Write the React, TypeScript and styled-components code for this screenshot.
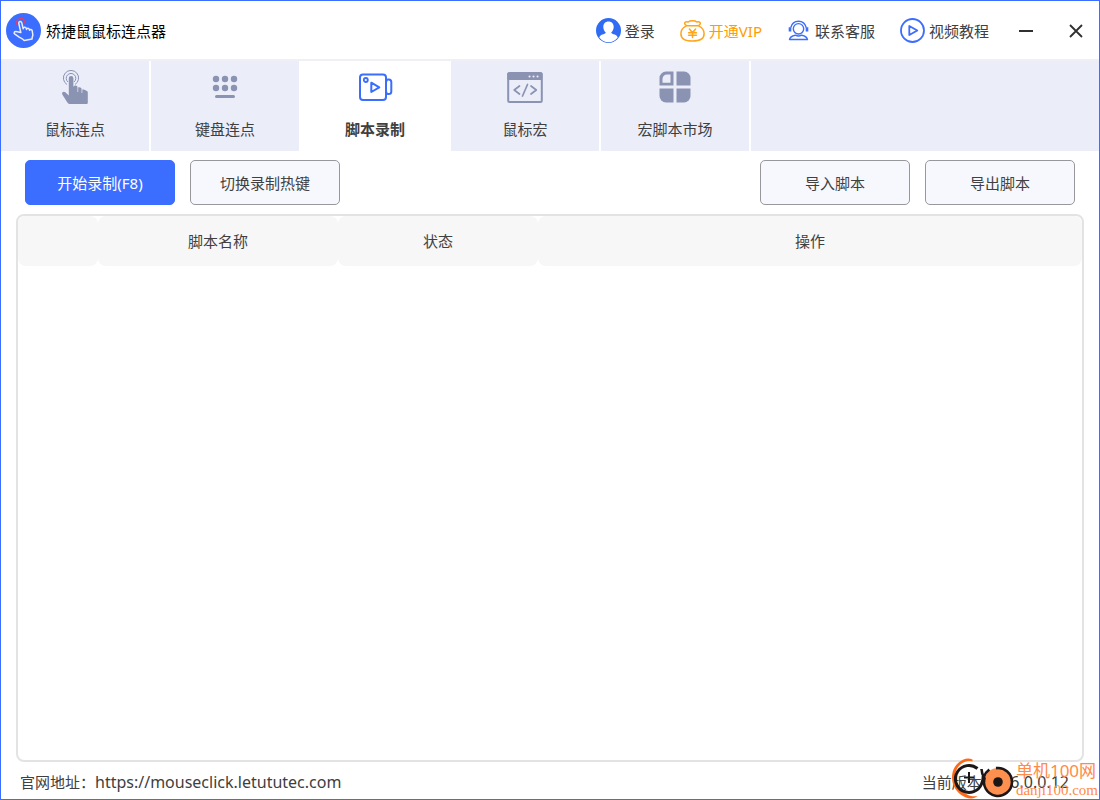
import React from "react";
import styled, { createGlobalStyle } from "styled-components";

const blue = "#3b6dff";
const ink = "#404040";
const slate = "#8b93b3";

const GlobalStyle = createGlobalStyle`
  *, *::before, *::after { box-sizing: border-box; }
  body {
    margin: 0;
    background: #fff;
    color: ${ink};
    font: 15px/20px "Noto Sans", "Noto Sans CJK SC", sans-serif;
  }
  button { font: inherit; color: inherit; border: 0; padding: 0; background: none; cursor: pointer; }
  svg { display: block; flex: none; }
`;

const Window = styled.div`
  position: relative;
  display: flex;
  flex-direction: column;
  min-height: 100vh;
  border: 1px solid ${blue};
`;

const TitleBar = styled.header`
  display: flex;
  align-items: center;
  justify-content: space-between;
  height: 60px;
  padding: 1px 13px 0 5px;
  border-bottom: 2px solid #f0eff6;
`;

const Brand = styled.h1`
  display: flex;
  align-items: center;
  gap: 5px;
  margin: 0;
  font-size: 15px;
  font-weight: 400;
  color: #000;
`;

const Actions = styled.div`
  display: flex;
  align-items: center;
`;

const ActionButton = styled.button<{ $vip?: boolean }>`
  display: flex;
  align-items: center;
  gap: 4px;
  margin-right: 25px;
  white-space: nowrap;
  color: ${(p) => (p.$vip ? "#ff9c00" : ink)};
`;

const WindowControls = styled.div`
  display: flex;
  gap: 30px;
  padding-left: 2px;
`;

const WindowButton = styled.button`
  display: grid;
  place-items: center;
  width: 20px;
  height: 30px;
`;

const Tabs = styled.nav`
  display: flex;
  height: 90px;
  background: #ebedf9;
`;

const Tab = styled.button<{ $active?: boolean }>`
  display: flex;
  flex-direction: column;
  align-items: center;
  gap: 14px;
  width: 150px;
  padding: 8px 0 0;
  border-right: 2px solid #fff;
  background: ${(p) => (p.$active ? "#fff" : "transparent")};
  font-weight: ${(p) => (p.$active ? 700 : 400)};
`;

const Main = styled.main`
  flex: 1;
  display: flex;
  flex-direction: column;
  padding: 9px 15px 0;
`;

const Toolbar = styled.div`
  display: flex;
  gap: 15px;
  padding: 0 9px;
  margin-bottom: 9px;
`;

const ToolButton = styled.button<{ $primary?: boolean; $pushRight?: boolean }>`
  width: 150px;
  height: 45px;
  border-radius: 5px;
  border: 1px solid ${(p) => (p.$primary ? blue : "#98989c")};
  background: ${(p) => (p.$primary ? blue : "#f6f8fd")};
  color: ${(p) => (p.$primary ? "#fff" : ink)};
  margin-left: ${(p) => (p.$pushRight ? "auto" : "0")};
`;

const TableFrame = styled.section`
  flex: 1;
  border: 2px solid #e3e3e3;
  border-radius: 8px;
`;

const ScriptTable = styled.table`
  width: 100%;
  table-layout: fixed;
  border-spacing: 0;
`;

const HeadCell = styled.th<{ $width?: number }>`
  width: ${(p) => (p.$width ? `${p.$width}px` : "auto")};
  height: 50px;
  padding: 0;
  border-radius: 8px;
  background: #f7f7f7;
  font-weight: 400;
`;

const Footer = styled.footer`
  display: flex;
  justify-content: space-between;
  padding: 10px 30px 7px 19px;
`;

const SiteLink = styled.a`
  font-size: 16px;
  color: inherit;
  text-decoration: none;
`;

const Version = styled.span`
  display: flex;
  gap: 4px;
`;

const VersionNumber = styled.span`
  font-size: 16px;
`;

const Watermark = styled.div`
  position: absolute;
  right: 1px;
  bottom: 0;
  display: flex;
  align-items: flex-end;
  gap: 2px;
  color: #ff8a4a;
`;

const WatermarkText = styled.div`
  display: flex;
  flex-direction: column;
  white-space: nowrap;
`;

const WatermarkName = styled.span`
  font-size: 17px;
  line-height: 20px;
`;

const WatermarkSite = styled.span`
  font: 15px/18px "Liberation Serif", serif;
`;

const LogoIcon = () => (
  <svg width="35" height="35" viewBox="0 0 35 35" fill="none">
    <circle cx="17.5" cy="17.5" r="17.5" fill={blue} />
    <path d="M11.200 12a4.200 4.200 0 1 1 7.600-1.500" stroke="#e0406a" strokeWidth="1.300" />
    <path
      d="M14.800 19.500 12.800 10.300c-.4-2 2.400-2.600 2.900-.7l1.500 6.100c0-1.700 2.600-2 3.100-.3l.2 1c.3-1.500 2.400-1.500 2.900 0l.2.900c.5-1.200 2.200-1 2.600.4l.6 3.800c.2 1.800-.9 2.700-.8 4.500l-7.800 1.600c-1.300-1.800-3.400-2.500-5.400-3.800l-4.200-2.900c-1.200-1 0-2.700 1.500-2.300Z"
      stroke="#e9edff" strokeWidth="1.500" strokeLinecap="round" strokeLinejoin="round"
    />
  </svg>
);

const UserIcon = () => (
  <svg width="25" height="25" viewBox="0 0 25 25">
    <circle cx="12.500" cy="12.500" r="12.500" fill="#2f6bf3" />
    <path d="M12.500 3.500c-3.200 0-5.200 2.200-5.200 5.300 0 2.400 1 4.500 2.500 5.700-.2 1.200-2 1.500-3.500 2.100-1.600.6-2.600 1.500-3 3a11.600 11.600 0 0 0 18.400 0c-.4-1.500-1.400-2.400-3-3-1.500-.6-3.300-.9-3.500-2.100 1.500-1.200 2.500-3.300 2.500-5.700 0-3.100-2-5.300-5.200-5.300Z" fill="#fff" />
  </svg>
);

const VipIcon = () => (
  <svg width="25" height="22" viewBox="0 0 25 22" fill="none" stroke="#ffa51a" strokeWidth="1.500" strokeLinecap="round" strokeLinejoin="round">
    <path d="M7 5.800C5.500 5 4.400 4.200 4.700 3c.4-1.300 2-1.300 3.400-1C9.300 1 10.800.800 12.500.800s3.200.2 4.400 1.200c1.400-.3 3-.3 3.400 1 .3 1.200-.8 2-2.300 2.800Z" />
    <path d="M6 6.200C2.700 7.800.900 10.600.900 13.700c0 4.800 3.800 7.300 11.600 7.300s11.600-2.500 11.600-7.300c0-3.100-1.800-5.900-5.100-7.500" />
    <path d="m9.400 9 3.100 3.800L15.600 9M12.500 12.800v4.700M8.600 12.800h7.800M8.600 15.200h7.800" />
  </svg>
);

const SupportIcon = () => (
  <svg width="24" height="21" viewBox="0 0 24 21" fill="none" stroke={blue} strokeWidth="1.400">
    <path d="M3.800 7.500c1-4 4.200-6.300 7.700-6.300s6.700 2.300 7.700 6.300" />
    <circle cx="11.500" cy="8.800" r="5.200" />
    <path d="M3 7.200v4.300M20 7.200v4.300" strokeWidth="2.600" />
    <path d="M2.500 19.500c.3-1.900 2.500-3.600 5.800-4.300 2.100 1 4.300 1 6.400 0 3.300.7 5.500 2.400 5.800 4.300Z" strokeLinejoin="round" />
  </svg>
);

const VideoIcon = () => (
  <svg width="25" height="25" viewBox="0 0 25 25" fill="none" stroke={blue} strokeWidth="1.800">
    <circle cx="12.500" cy="12.500" r="11.500" />
    <path d="M9.300 8v9l8-4.500Z" strokeLinejoin="round" />
  </svg>
);

const MinimiseIcon = () => (
  <svg width="14" height="14" viewBox="0 0 14 14"><path d="M0 7h14" stroke="#303030" strokeWidth="2" /></svg>
);

const CloseIcon = () => (
  <svg width="14" height="14" viewBox="0 0 14 14"><path d="m1 1 12 12M13 1 1 13" stroke="#303030" strokeWidth="1.800" /></svg>
);

const ClickIcon = () => (
  <svg width="36" height="36" viewBox="0 0 36 36" fill={slate}>
    <g fill="none" stroke={slate} strokeWidth="1">
      <path d="M10 15.500a7.600 7.600 0 1 1 8 0" />
      <path d="M11 13a4.800 4.800 0 1 1 6 0" />
    </g>
    <path d="M11.800 9.200a2.300 2.300 0 0 1 4.600 0v8.600c1.400-2 4-1.300 4.400.8 1.600-.9 3.800-.2 4 2 1.700-.5 3.500.2 5.200 1.400.8.500.8 1 .8 2V33.500c0 1-.5 1.500-1.500 1.500H13.200c-1.500 0-2.300-.6-3-1.800L5.300 25.500c-1-2 1.300-3.700 3-2.200l3.500 3.200Z" />
    <path d="M20.800 18v5M24.900 20v4" stroke="#ebedf9" strokeWidth=".700" />
  </svg>
);

const KeyboardIcon = () => (
  <svg width="36" height="36" viewBox="0 0 36 36" fill={slate}>
    {[9, 18, 27].map((x) => (
      <React.Fragment key={x}>
        <circle cx={x} cy="10" r="3.200" />
        <circle cx={x} cy="19" r="3.200" />
      </React.Fragment>
    ))}
    <rect x="8" y="26" width="20" height="3" rx="1.500" />
  </svg>
);

const RecordIcon = () => (
  <svg width="36" height="36" viewBox="0 0 36 36" fill="none" stroke={blue} strokeWidth="2" strokeLinejoin="round">
    <rect x="3" y="5.500" width="26" height="25.500" rx="3" />
    <circle cx="8.800" cy="11" r="2" strokeWidth="1.800" />
    <path d="M14.300 13.700v9.300l8-4.600Z" />
    <path d="M29 12h.5c0-1 .4-1.500 1.300-1.500h1c1.800 0 2.500.7 2.500 2.500v9.500c0 1.800-.7 2.500-2.500 2.500h-1c-.9 0-1.300-.5-1.300-1.500H29" />
  </svg>
);

const MacroIcon = () => (
  <svg width="36" height="36" viewBox="0 0 36 36" fill="none" stroke={slate} strokeWidth="2" strokeLinecap="round" strokeLinejoin="round">
    <rect x="1.200" y="4" width="33.600" height="29" rx="1.500" />
    <path d="M1.200 4h33.600v6.500H1.200Z" fill={slate} strokeWidth="1" />
    <path d="m12.500 17-5.300 4 5.300 4M24 17l5.300 4-5.300 4M20.500 15.500l-5 11.500" strokeWidth="1.700" />
    <path d="M22.500 7.500h.1M26.500 7.500h.1M30.500 7.500h.1" stroke="#ebedf9" />
  </svg>
);

const MarketIcon = () => (
  <svg width="36" height="36" viewBox="0 0 36 36" fill={slate}>
    <path fillRule="evenodd" d="M9 2.500h7.500v14H2.500V9A6.500 6.500 0 0 1 9 2.500Zm1 3A4.500 4.500 0 0 0 5.500 10v3.700h8V5.500Z" />
    <path d="M19.500 2.500H27A6.500 6.500 0 0 1 33.500 9v7.500h-14Z" />
    <path d="M2.500 19.500h14v14H9A6.500 6.500 0 0 1 2.500 27Z" />
    <path d="M19.500 19.500h14V27a6.500 6.500 0 0 1-6.500 6.500h-7.500Z" />
  </svg>
);

const WatermarkLogo = () => (
  <svg width="64" height="41" viewBox="0 0 64 41" fill="none">
    <path d="M22.500 1.500C20 0 16 0 13.500 1.500 6 5 2 11.500 2 19.500c0 9 5.500 16.500 14 20 3.500 1.300 9 1.500 11.500-1.500-4 .8-8 0-10.500-1.500C9 33 5 26.500 5 19.500 5 12 9 5.500 16 3.500c2-.6 4.500-.5 6.500 0Z" fill="#ff6a1a" />
    <path d="M27.500 10.500A13.500 13.500 0 1 0 31.500 26c1.300-2.500 1.700-5.500 1.700-8" stroke="#1d1616" strokeWidth="3" />
    <path d="M19 14v11M14 19.500h10" stroke="#1d1616" strokeWidth="2" />
    <circle cx="48" cy="24" r="14" fill="#ff8f4f" />
    <path d="M46 10.100A14 14 0 1 1 34.800 19.200" stroke="#1d1616" strokeWidth="2.600" />
    <path d="M31.500 11c.2 3 .8 5.500 2.300 8 1-3 2.800-5.500 5.500-7.500" stroke="#1d1616" strokeWidth="2.600" />
    <circle cx="48" cy="24" r="4.800" fill="#1d1616" />
  </svg>
);

const tabs = [
  { label: "鼠标连点", Icon: ClickIcon },
  { label: "键盘连点", Icon: KeyboardIcon },
  { label: "脚本录制", Icon: RecordIcon, active: true },
  { label: "鼠标宏", Icon: MacroIcon },
  { label: "宏脚本市场", Icon: MarketIcon },
];

export default function App() {
  return (
    <>
      <GlobalStyle />
      <Window>
        <TitleBar>
          <Brand><LogoIcon />矫捷鼠鼠标连点器</Brand>
          <Actions>
            <ActionButton><UserIcon />登录</ActionButton>
            <ActionButton $vip><VipIcon />开通VIP</ActionButton>
            <ActionButton><SupportIcon />联系客服</ActionButton>
            <ActionButton><VideoIcon />视频教程</ActionButton>
            <WindowControls>
              <WindowButton aria-label="最小化"><MinimiseIcon /></WindowButton>
              <WindowButton aria-label="关闭"><CloseIcon /></WindowButton>
            </WindowControls>
          </Actions>
        </TitleBar>
        <Tabs>
          {tabs.map(({ label, Icon, active }) => (
            <Tab key={label} $active={active} aria-current={active ? "page" : undefined}>
              <Icon />
              {label}
            </Tab>
          ))}
        </Tabs>
        <Main>
          <Toolbar>
            <ToolButton $primary>开始录制(F8)</ToolButton>
            <ToolButton>切换录制热键</ToolButton>
            <ToolButton $pushRight>导入脚本</ToolButton>
            <ToolButton>导出脚本</ToolButton>
          </Toolbar>
          <TableFrame>
            <ScriptTable>
              <thead>
                <tr>
                  <HeadCell $width={80} />
                  <HeadCell $width={240}>脚本名称</HeadCell>
                  <HeadCell $width={200}>状态</HeadCell>
                  <HeadCell>操作</HeadCell>
                </tr>
              </thead>
            </ScriptTable>
          </TableFrame>
        </Main>
        <Footer>
          <span>官网地址：<SiteLink href="https://mouseclick.letututec.com">https://mouseclick.letututec.com</SiteLink></span>
          <Version>
            <span>当前版本：</span>
            <VersionNumber>V6.0.0.12</VersionNumber>
          </Version>
        </Footer>
        <Watermark>
          <WatermarkLogo />
          <WatermarkText>
            <WatermarkName>单机100网</WatermarkName>
            <WatermarkSite>danji100.com</WatermarkSite>
          </WatermarkText>
        </Watermark>
      </Window>
    </>
  );
}
